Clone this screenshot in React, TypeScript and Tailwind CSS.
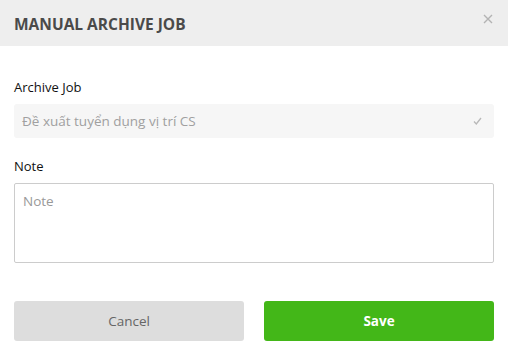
import React from 'react';

const font = { fontFamily: '"Open Sans", "Noto Sans", sans-serif' };

const Label: React.FC<{ children: React.ReactNode }> = ({ children }) => (
  <div className="text-[13px] font-medium text-[#111111] mb-[8px] leading-[18px]">{children}</div>
);

const App: React.FC = () => {
  return (
    <div className="w-[508px] h-[351px] bg-white" style={font}>
      <div className="h-[46px] bg-[#eeeeee] flex items-center justify-between pl-[14px] pr-[15px]">
        <h2 className="text-[15.5px] font-bold text-[#4a4a4a] leading-[20px] mt-[1px]">MANUAL ARCHIVE JOB</h2>
        <svg width="10" height="10" viewBox="0 0 10 10" className="mt-[-8px]">
          <path d="M1 1L9 9M9 1L1 9" stroke="#b3b3b3" strokeWidth="1.4" />
        </svg>
      </div>

      <div className="px-[14px] pt-[32px]">
        <Label>Archive Job</Label>
        <div className="h-[34px] bg-[#f6f6f6] rounded-[3px] flex items-center justify-between pl-[8px] pr-[12px]">
          <span className="text-[13.5px] text-[#a0a0a0]">Đề xuất tuyển dụng vị trí CS</span>
          <svg width="9" height="8" viewBox="0 0 9 8">
            <path d="M1 4.5L3.3 7L8 1" fill="none" stroke="#b8b8b8" strokeWidth="1.3" />
          </svg>
        </div>

        <div className="mt-[19px]">
          <Label>Note</Label>
          <textarea
            placeholder="Note"
            className="block w-full h-[80px] border border-[#cccccc] rounded-[2px] px-[8px] py-[7px] text-[13.5px] resize-none outline-none placeholder:text-[#999999]"
            style={font}
          />
        </div>

        <div className="mt-[38px] flex gap-[20px]">
          <button className="flex-1 h-[40px] rounded-[3px] bg-[#dddddd] text-[13.5px] text-[#666666]" style={font}>
            Cancel
          </button>
          <button className="flex-1 h-[40px] rounded-[3px] bg-[#43b718] text-[13.5px] font-bold text-white" style={font}>
            Save
          </button>
        </div>
      </div>
    </div>
  );
};

export default App;
